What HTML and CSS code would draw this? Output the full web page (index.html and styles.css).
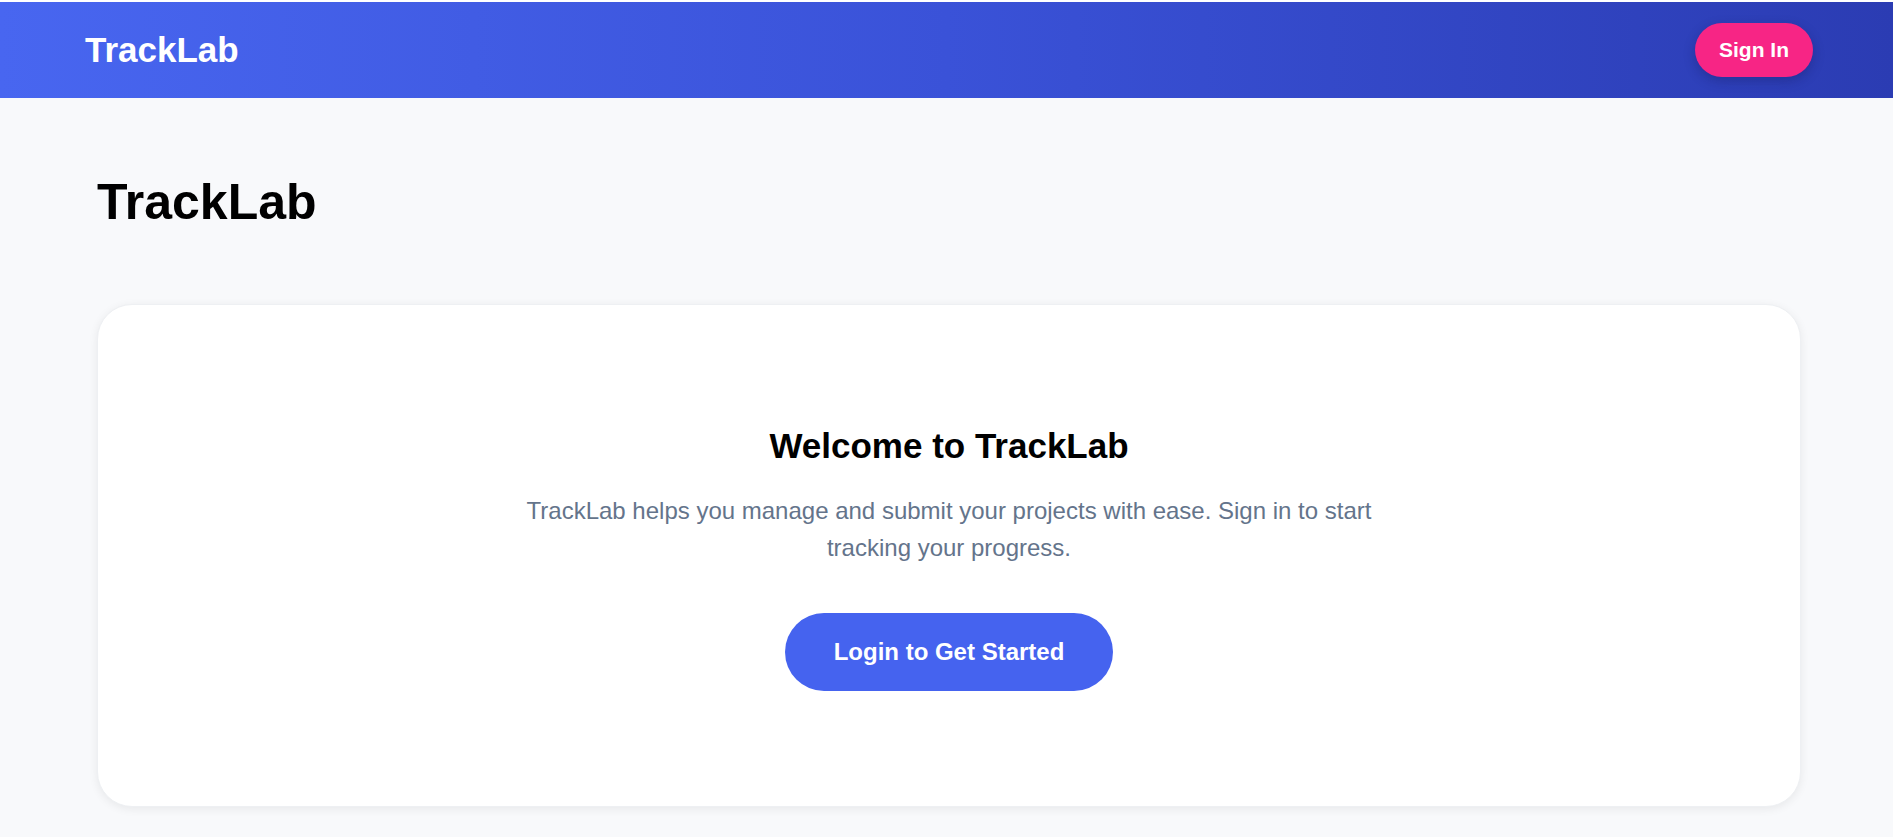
FILE: index.html
```html
<!DOCTYPE html>
<html lang="en">
<head>
<meta charset="utf-8">
<title>TrackLab</title>
<link rel="stylesheet" href="styles.css">
</head>
<body>
<div class="page">
  <header class="topbar">
    <div class="brand">TrackLab</div>
    <button class="signin">Sign In</button>
  </header>
  <main class="main">
    <h1 class="page-title">TrackLab</h1>
    <section class="card">
      <h2 class="welcome">Welcome to TrackLab</h2>
      <p class="intro">TrackLab helps you manage and submit your projects with ease. Sign in to start tracking your progress.</p>
      <button class="cta">Login to Get Started</button>
    </section>
  </main>
</div>
</body>
</html>
```
FILE: styles.css
```css
* { box-sizing: border-box; }
html, body { margin: 0; padding: 0; }
body {
  font-family: "Liberation Sans", Arial, sans-serif;
  padding-top: 2px;
  background-color: #ffffff;
}
.page {
  background: #f8f9fb;
  min-height: 835px;
}
.topbar {
  height: 96px;
  display: flex;
  align-items: center;
  justify-content: space-between;
  padding: 0 80px 0 85px;
  background: linear-gradient(90deg, #4866f0 0%, #3a52d8 50%, #2b3cb3 100%);
}
.brand {
  color: #ffffff;
  font-weight: 700;
  font-size: 35px;
  line-height: 42px;
}
.signin {
  font-family: inherit;
  font-weight: 700;
  font-size: 21px;
  line-height: 24px;
  color: #ffffff;
  background: #f72585;
  border: none;
  border-radius: 999px;
  padding: 15px 24px;
  box-shadow: 0 4px 12px rgba(20, 20, 80, 0.3);
}
.main {
  padding: 74px 92px 30px 97px;
}
.page-title {
  margin: 0 0 72px;
  font-size: 50px;
  line-height: 60px;
  font-weight: 700;
  color: #000000;
}
.card {
  background: #ffffff;
  border-radius: 35px;
  box-shadow: 0 2px 10px rgba(0, 0, 0, 0.07);
  border: 1px solid #eef0f3;
  padding: 120px 40px 115px;
  display: flex;
  flex-direction: column;
  align-items: center;
  text-align: center;
}
.welcome {
  margin: 0 0 26px;
  font-size: 35px;
  line-height: 42px;
  font-weight: 700;
  color: #000000;
}
.intro {
  margin: 0 0 47px;
  max-width: 880px;
  font-size: 24px;
  line-height: 36.5px;
  color: #64748b;
}
.cta {
  font-family: inherit;
  font-weight: 700;
  font-size: 24px;
  line-height: 28px;
  color: #ffffff;
  background: #4563ef;
  border: none;
  border-radius: 999px;
  padding: 25px 49px;
}
```
